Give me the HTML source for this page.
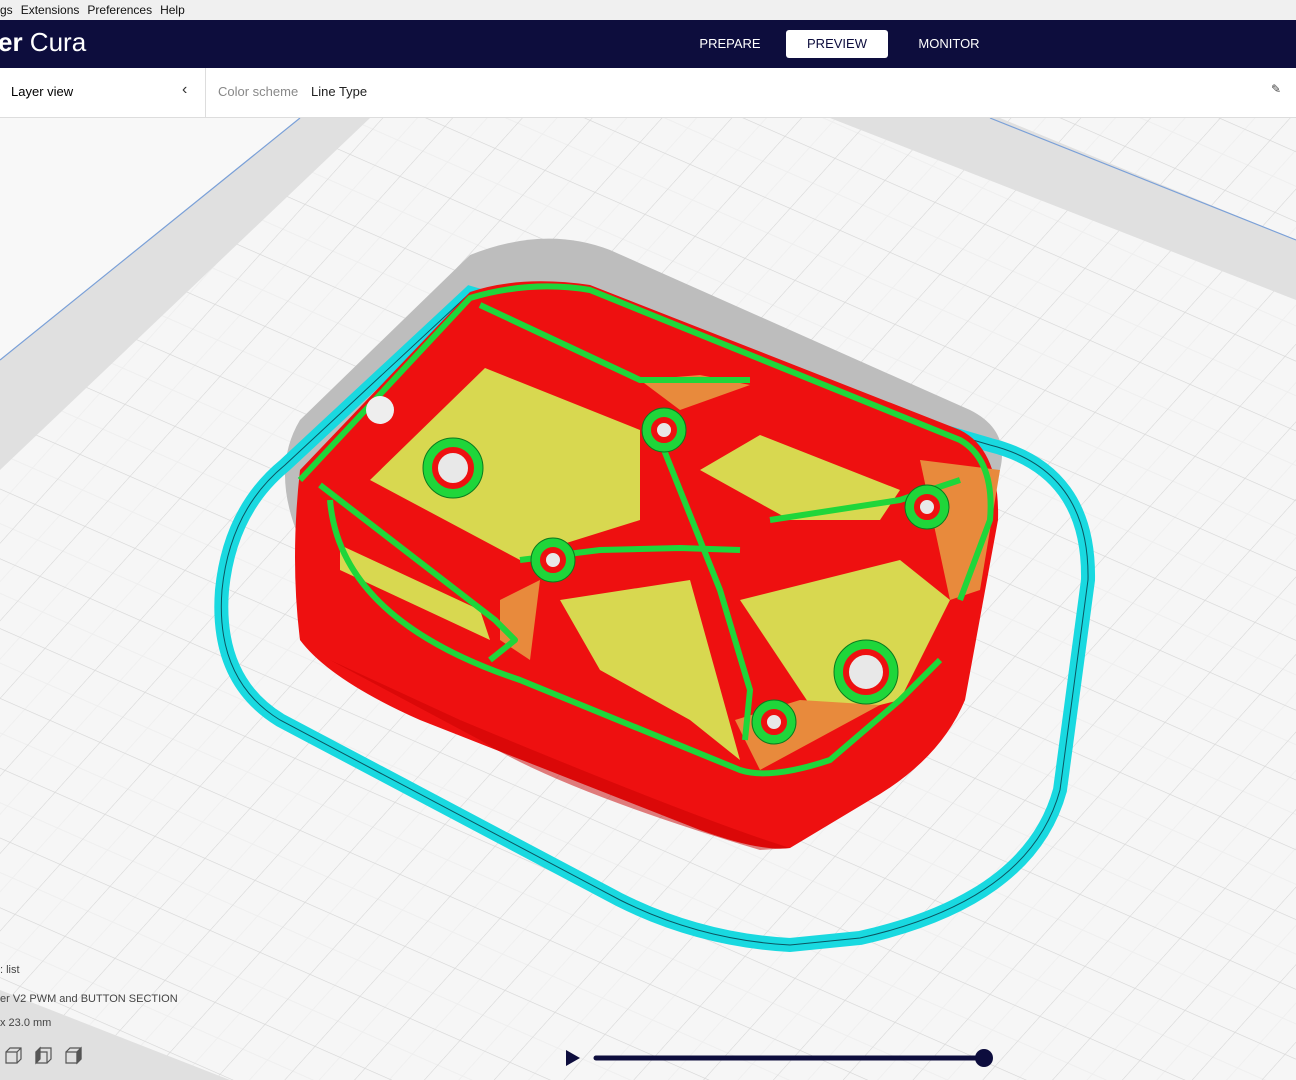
<!DOCTYPE html>
<html><head><meta charset="utf-8"><style>
body{margin:0;width:1296px;height:1080px;overflow:hidden;position:relative;font-family:"Liberation Sans","DejaVu Sans",sans-serif;background:#f8f8f8}
.menu{position:absolute;top:0;left:0;width:1296px;height:20px;background:#f0f0f0;font-size:12px;color:#111;line-height:20px}
.menu span{margin-right:8px}
.hdr{position:absolute;top:20px;left:0;width:1296px;height:48px;background:#0d0d3d;color:#fff}
.logo{position:absolute;left:-2px;top:7px;font-size:26px}
.tab{position:absolute;top:10px;height:28px;line-height:28px;font-size:13px;text-align:center;color:#fff}
.bar{position:absolute;top:68px;left:0;width:1296px;height:49px;background:#fff;border-bottom:1px solid #ddd;font-size:13px}
svg{position:absolute;left:0;top:0}
.t{position:absolute;font-size:11px;color:#444}
</style></head><body>
<svg width="1296" height="1080" viewBox="0 0 1296 1080">
<defs>
<pattern id="g" width="50" height="50" patternUnits="userSpaceOnUse" patternTransform="matrix(1,0.44,-0.9,1,0,0)">
<rect width="50" height="50" fill="#f6f6f6"/>
<path d="M0 25H50M25 0V50" stroke="#ececec" stroke-width="0.6"/>
<path d="M0 0H50M0 0V50" stroke="#d4d4d4" stroke-width="1"/>
</pattern>
</defs>
<rect width="1296" height="1080" fill="#f8f8f8"/>
<polygon points="0,360 300,118 1296,118 1296,1080 230,1080 0,990" fill="url(#g)"/>
<polygon points="0,360 300,118 370,118 0,470" fill="#e0e0e0"/>
<polygon points="830,118 1000,118 1296,240 1296,300" fill="#e0e0e0"/>
<polygon points="0,990 230,1080 0,1080" fill="#e0e0e0"/>
<line x1="0" y1="360" x2="300" y2="118" stroke="#7aa0d8" stroke-width="1.2"/>
<line x1="990" y1="118" x2="1296" y2="240" stroke="#7aa0d8" stroke-width="1.2"/>
<!-- shadow -->
<path d="M470 255 Q545 225 610 250 L970 410 Q1010 430 1000 470 L720 560 L300 540 Q270 470 300 420 Z" fill="#bdbdbd"/>
<!-- skirt -->
<path d="M470 293 L990 445 Q1090 470 1088 580 L1060 790 Q1030 900 860 938 L790 945 Q700 940 620 900 L280 720 Q215 680 222 590 Q230 510 285 465 Z" fill="none" stroke="#19d9e0" stroke-width="14"/>
<path d="M470 293 L990 445 Q1090 470 1088 580 L1060 790 Q1030 900 860 938 L790 945 Q700 940 620 900 L280 720 Q215 680 222 590 Q230 510 285 465 Z" fill="none" stroke="#0a5560" stroke-width="1"/>
<!-- red body -->
<path d="M300 470 L470 292 Q520 275 590 285 L960 430 Q1000 450 998 520 L965 700 Q940 760 870 800 L790 848 Q760 852 700 830 L420 720 Q330 680 300 640 Q290 560 300 470 Z" fill="#ee1010"/>
<path d="M330 660 L480 740 Q560 790 760 850 L790 848 Q700 820 460 720 Z" fill="#c80000" opacity="0.5"/>
<polygon points="370,480 485,368 640,430 640,520 560,545 520,560" fill="#d8d850"/>
<polygon points="700,470 760,435 900,490 880,520 790,520" fill="#d8d850"/>
<polygon points="740,600 900,560 950,600 900,700 820,720" fill="#d8d850"/>
<polygon points="560,600 690,580 740,760 690,720 600,670" fill="#d8d850"/>
<polygon points="340,545 480,610 490,640 340,570" fill="#d8d850"/>
<polygon points="640,380 700,375 750,385 680,410" fill="#e88a3c"/>
<polygon points="920,460 1000,470 980,590 950,600" fill="#e88a3c"/>
<polygon points="735,720 800,700 880,705 760,770" fill="#e88a3c"/>
<polygon points="500,600 540,580 530,660 500,640" fill="#e88a3c"/>
<g fill="none" stroke="#1fd63a" stroke-width="6" stroke-linejoin="round">
<path d="M300 480 L470 298 Q530 280 590 290 L960 440 Q995 460 990 520 L960 600"/>
<path d="M320 485 L495 620 L515 640 L490 660"/>
<path d="M480 305 L640 380 L750 380"/>
<path d="M660 440 L700 540 L720 590 L750 690 L745 740"/>
<path d="M520 560 L600 550 L680 548 L740 550"/>
<path d="M770 520 L900 500 L960 480"/>
<path d="M330 500 Q340 620 520 680 L740 770 Q770 780 830 760 L900 700 L940 660"/>
</g>
<g fill="#1fd63a" stroke="#0b7a1e" stroke-width="1">
<circle cx="453" cy="468" r="30"/><circle cx="664" cy="430" r="22"/><circle cx="927" cy="507" r="22"/>
<circle cx="553" cy="560" r="22"/><circle cx="866" cy="672" r="32"/><circle cx="774" cy="722" r="22"/>
</g>
<g fill="#e8e8e8" stroke="#ee1010" stroke-width="6">
<circle cx="453" cy="468" r="18"/><circle cx="664" cy="430" r="10"/><circle cx="927" cy="507" r="10"/>
<circle cx="553" cy="560" r="10"/><circle cx="866" cy="672" r="20"/><circle cx="774" cy="722" r="10"/>
</g>
<circle cx="380" cy="410" r="14" fill="#eee"/>
<line x1="596" y1="1058" x2="982" y2="1058" stroke="#0d0d3d" stroke-width="5" stroke-linecap="round"/>
<circle cx="984" cy="1058" r="9" fill="#0d0d3d"/>
<polygon points="566,1050 580,1058 566,1066" fill="#0d0d3d"/>
<g fill="none" stroke="#555" stroke-width="1.2">
<path d="M6 1052h11v11H6zM6 1052l4-4h11v11l-4 4M17 1052l4-4"/>
<path d="M36 1052h11v11H36zM36 1052l4-4h11v11l-4 4" /><path d="M36 1052l4-4v11l-4 4z" fill="#555"/>
<path d="M66 1052h11v11H66zM66 1052l4-4h11v11l-4 4M77 1052l4-4"/><path d="M77 1052l4-4v11l-4 4z" fill="#555"/>
</g>
</svg>
<div class="menu"><span>gs</span><span>Extensions</span><span>Preferences</span><span>Help</span></div>
<div class="hdr"><div class="logo"><b>er</b> Cura</div>
<div class="tab" style="left:690px;width:80px">PREPARE</div>
<div class="tab" style="left:786px;width:102px;background:#fff;color:#0d0d3d;border-radius:3px">PREVIEW</div>
<div class="tab" style="left:906px;width:86px">MONITOR</div></div>
<div class="bar">
<div style="position:absolute;left:11px;top:16px">Layer view</div>
<div style="position:absolute;left:182px;top:13px;font-size:16px;color:#333">&#8249;</div>
<div style="position:absolute;left:205px;top:0;width:1px;height:49px;background:#ddd"></div>
<div style="position:absolute;left:218px;top:16px;color:#888">Color scheme</div>
<div style="position:absolute;left:311px;top:16px;color:#222">Line Type</div>
<div style="position:absolute;left:1271px;top:14px;color:#444;font-size:12px">&#9998;</div>
</div>
<div class="t" style="left:0;top:964px">: list</div>
<div class="t" style="left:0;top:993px">er V2 PWM and BUTTON SECTION</div>
<div class="t" style="left:0;top:1017px">x 23.0 mm</div>
</body></html>
